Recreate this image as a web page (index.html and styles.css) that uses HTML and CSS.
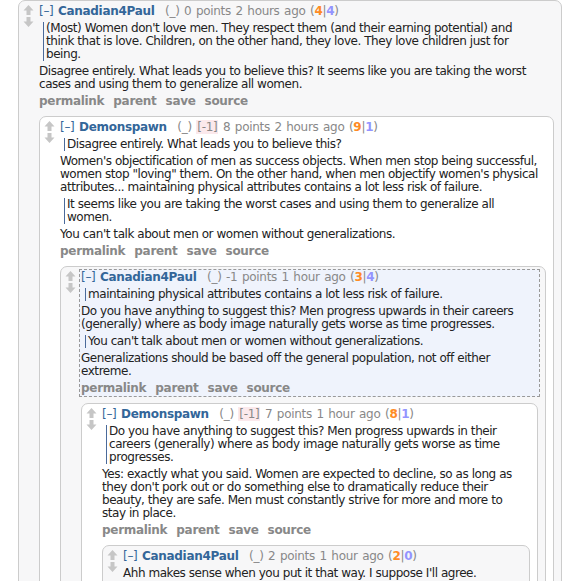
FILE: index.html
```html
<!DOCTYPE html>
<html lang="en">
    <head>
        <title>Comments</title>
        <link rel="stylesheet" href="styles.css">
    </head>
    <body>
        <div class="thread">
            <div class="comment odd">
                <div class="midcol">
                    <svg class="arrow" viewBox="0 0 10 10"><polygon points="0,5.5 5,0 10,5.5 7,5.5 7,10 3,10 3,5.5"/></svg>
                    <svg class="arrow" viewBox="0 0 10 10"><polygon points="0,4.5 5,10 10,4.5 7,4.5 7,0 3,0 3,4.5"/></svg>
                </div>
                <div class="entry">
                    <p class="tagline">
                        <span class="expand">[&ndash;]</span>
                        <span class="author">Canadian4Paul</span>
                        <span class="flair">(_)</span>
                        <span class="score">0 points 2 hours ago</span>
                        <span class="votes">(<b class="up">4</b>|<b class="down">4</b>)</span>
                    </p>
                    <div class="md">
                        <blockquote><p>(Most) Women don't love men. They respect them (and their earning potential) and<br>think that is love. Children, on the other hand, they love. They love children just for<br>being.</p></blockquote>
                        <p>Disagree entirely. What leads you to believe this? It seems like you are taking the worst cases and using them to generalize all women.</p>
                    </div>
                    <ul class="buttons">
                        <li>permalink</li>
                        <li>parent</li>
                        <li>save</li>
                        <li>source</li>
                    </ul>
                </div>
                <div class="child">
                    <div class="comment even">
                        <div class="midcol">
                            <svg class="arrow" viewBox="0 0 10 10"><polygon points="0,5.5 5,0 10,5.5 7,5.5 7,10 3,10 3,5.5"/></svg>
                            <svg class="arrow" viewBox="0 0 10 10"><polygon points="0,4.5 5,10 10,4.5 7,4.5 7,0 3,0 3,4.5"/></svg>
                        </div>
                        <div class="entry">
                            <p class="tagline">
                                <span class="expand">[&ndash;]</span>
                                <span class="author">Demonspawn</span>
                                <span class="flair">(_)</span>
                                <span class="tag">[-1]</span>
                                <span class="score">8 points 2 hours ago</span>
                                <span class="votes">(<b class="up">9</b>|<b class="down">1</b>)</span>
                            </p>
                            <div class="md">
                                <blockquote><p>Disagree entirely. What leads you to believe this?</p></blockquote>
                                <p>Women's objectification of men as success objects. When men stop being successful, women stop "loving" them. On the other hand, when men objectify women's physical attributes... maintaining physical attributes contains a lot less risk of failure.</p>
                                <blockquote><p>It seems like you are taking the worst cases and using them to generalize all<br>women.</p></blockquote>
                                <p>You can't talk about men or women without generalizations.</p>
                            </div>
                            <ul class="buttons">
                                <li>permalink</li>
                                <li>parent</li>
                                <li>save</li>
                                <li>source</li>
                            </ul>
                        </div>
                        <div class="child">
                            <div class="comment odd">
                                <div class="midcol">
                                    <svg class="arrow" viewBox="0 0 10 10"><polygon points="0,5.5 5,0 10,5.5 7,5.5 7,10 3,10 3,5.5"/></svg>
                                    <svg class="arrow" viewBox="0 0 10 10"><polygon points="0,4.5 5,10 10,4.5 7,4.5 7,0 3,0 3,4.5"/></svg>
                                </div>
                                <div class="entry target">
                                    <p class="tagline">
                                        <span class="expand">[&ndash;]</span>
                                        <span class="author">Canadian4Paul</span>
                                        <span class="flair">(_)</span>
                                        <span class="score">-1 points 1 hour ago</span>
                                        <span class="votes">(<b class="up">3</b>|<b class="down">4</b>)</span>
                                    </p>
                                    <div class="md">
                                        <blockquote><p>maintaining physical attributes contains a lot less risk of failure.</p></blockquote>
                                        <p>Do you have anything to suggest this? Men progress upwards in their careers (generally) where as body image naturally gets worse as time progresses.</p>
                                        <blockquote><p>You can't talk about men or women without generalizations.</p></blockquote>
                                        <p>Generalizations should be based off the general population, not off either extreme.</p>
                                    </div>
                                    <ul class="buttons">
                                        <li>permalink</li>
                                        <li>parent</li>
                                        <li>save</li>
                                        <li>source</li>
                                    </ul>
                                </div>
                                <div class="child">
                                    <div class="comment even">
                                        <div class="midcol">
                                            <svg class="arrow" viewBox="0 0 10 10"><polygon points="0,5.5 5,0 10,5.5 7,5.5 7,10 3,10 3,5.5"/></svg>
                                            <svg class="arrow" viewBox="0 0 10 10"><polygon points="0,4.5 5,10 10,4.5 7,4.5 7,0 3,0 3,4.5"/></svg>
                                        </div>
                                        <div class="entry">
                                            <p class="tagline">
                                                <span class="expand">[&ndash;]</span>
                                                <span class="author">Demonspawn</span>
                                                <span class="flair">(_)</span>
                                                <span class="tag">[-1]</span>
                                                <span class="score">7 points 1 hour ago</span>
                                                <span class="votes">(<b class="up">8</b>|<b class="down">1</b>)</span>
                                            </p>
                                            <div class="md">
                                                <blockquote><p>Do you have anything to suggest this? Men progress upwards in their careers (generally) where as body image naturally gets worse as time progresses.</p></blockquote>
                                                <p>Yes: exactly what you said. Women are expected to decline, so as long as they don't pork out or do something else to dramatically reduce their beauty, they are safe. Men must constantly strive for more and more to<br>stay in place.</p>
                                            </div>
                                            <ul class="buttons">
                                                <li>permalink</li>
                                                <li>parent</li>
                                                <li>save</li>
                                                <li>source</li>
                                            </ul>
                                        </div>
                                        <div class="child">
                                            <div class="comment odd">
                                                <div class="midcol">
                                                    <svg class="arrow" viewBox="0 0 10 10"><polygon points="0,5.5 5,0 10,5.5 7,5.5 7,10 3,10 3,5.5"/></svg>
                                                    <svg class="arrow" viewBox="0 0 10 10"><polygon points="0,4.5 5,10 10,4.5 7,4.5 7,0 3,0 3,4.5"/></svg>
                                                </div>
                                                <div class="entry">
                                                    <p class="tagline">
                                                        <span class="expand">[&ndash;]</span>
                                                        <span class="author">Canadian4Paul</span>
                                                        <span class="flair">(_)</span>
                                                        <span class="score">2 points 1 hour ago</span>
                                                        <span class="votes">(<b class="up">2</b>|<b class="down">0</b>)</span>
                                                    </p>
                                                    <div class="md">
                                                        <p>Ahh makes sense when you put it that way. I suppose I'll agree.</p>
                                                    </div>
                                                    <ul class="buttons">
                                                        <li>permalink</li>
                                                        <li>parent</li>
                                                        <li>save</li>
                                                        <li>source</li>
                                                    </ul>
                                                </div>
                                            </div>
                                        </div>
                                    </div>
                                </div>
                            </div>
                        </div>
                    </div>
                </div>
            </div>
        </div>
    </body>
</html>
```

FILE: styles.css
```css
* {
    box-sizing: border-box;
}

body {
    margin: 0;
    background-color: white;
    font-family: "DejaVu Sans", Verdana, sans-serif;
    font-size: 12px;
    line-height: 13px;
    letter-spacing: -0.3px;
    color: #222;
    overflow: hidden;
}

.thread {
    padding-left: 18px;
    padding-right: 2px;
}

/* comment boxes */
.comment {
    display: grid;
    grid-template-columns: 18px 1fr;
    border: 1px solid #ccc;
    border-radius: 7px;
    padding-bottom: 6px;
}

.odd {
    background-color: #f7f7f8;
}

.even {
    background-color: white;
}

.midcol {
    display: flex;
    flex-direction: column;
    align-items: center;
    gap: 2px;
    padding-top: 4px;
    padding-left: 1px;
}

.arrow {
    width: 11px;
    height: 10px;
    fill: #c6c6c6;
}

.entry {
    margin-top: 2px;
    margin-right: 5px;
    padding: 1px;
    border: 1px solid transparent;
}

.target {
    background-color: #eff3fc;
    border: 1px dashed #999;
}

.child {
    grid-column: 2;
    margin: 6px 7px 0 2px;
}

/* tagline */
.tagline {
    margin: 0;
    color: #888;
    word-spacing: 1px;
}

.expand {
    color: #369;
}

.author {
    color: #369;
    font-weight: bold;
    margin-right: 6px;
}

.tag {
    background-color: #fbe9ec;
    padding: 0 1px;
}

.votes .up {
    color: #ff8b24;
}

.votes .down {
    color: #9494ff;
}

/* body text */
.md {
    letter-spacing: -0.45px;
}

.md p {
    margin: 4px 0;
}

.md blockquote {
    margin: 4px 0 4px 4px;
    padding-left: 2px;
    border-left: 1px solid #4a6a9a;
}

.md blockquote p {
    margin: 0;
}

.buttons {
    display: flex;
    gap: 9px;
    margin: 4px 0 0;
    padding: 0;
    list-style: none;
    font-weight: bold;
    color: #888;
}
```
